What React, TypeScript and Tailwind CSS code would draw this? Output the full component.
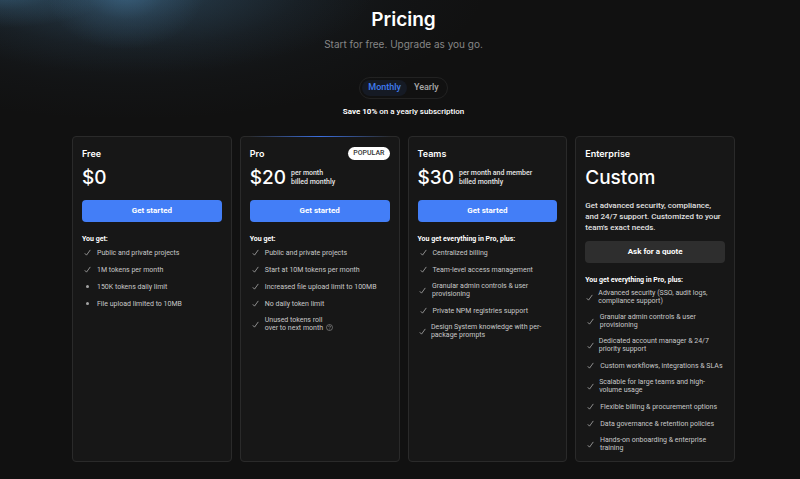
import React, { useState } from 'react';

type Billing = 'monthly' | 'yearly';

interface Feature {
  label: React.ReactNode;
  limited?: boolean;
}

interface Plan {
  name: string;
  price: string;
  terms?: string[];
  description?: string;
  popular?: boolean;
  cta: string;
  intro: string;
  features: Feature[];
}

const HelpIcon: React.FC = () => (
  <svg viewBox="0 0 14 14" className="inline-block w-[7px] h-[7px] ml-[3px] align-[-1px]" fill="none" stroke="#9a9a9a" strokeWidth="1.2" aria-hidden="true">
    <circle cx="7" cy="7" r="6" />
    <path d="M5.2 5.6a1.9 1.9 0 1 1 2.7 1.7c-.6.3-.9.6-.9 1.2" />
    <path d="M7 9.8v1" />
  </svg>
);

const plans: Plan[] = [
  {
    name: 'Free',
    price: '$0',
    cta: 'Get started',
    intro: 'You get:',
    features: [
      { label: 'Public and private projects' },
      { label: '1M tokens per month' },
      { label: '150K tokens daily limit', limited: true },
      { label: 'File upload limited to 10MB', limited: true },
    ],
  },
  {
    name: 'Pro',
    price: '$20',
    terms: ['per month', 'billed monthly'],
    popular: true,
    cta: 'Get started',
    intro: 'You get:',
    features: [
      { label: 'Public and private projects' },
      { label: 'Start at 10M tokens per month' },
      { label: 'Increased file upload limit to 100MB' },
      { label: 'No daily token limit' },
      { label: <>Unused tokens roll<br />over to next month<HelpIcon /></> },
    ],
  },
  {
    name: 'Teams',
    price: '$30',
    terms: ['per month and member', 'billed monthly'],
    cta: 'Get started',
    intro: 'You get everything in Pro, plus:',
    features: [
      { label: 'Centralized billing' },
      { label: 'Team-level access management' },
      { label: 'Granular admin controls & user provisioning' },
      { label: 'Private NPM registries support' },
      { label: 'Design System knowledge with per-package prompts' },
    ],
  },
  {
    name: 'Enterprise',
    price: 'Custom',
    description: "Get advanced security, compliance, and 24/7 support. Customized to your team's exact needs.",
    cta: 'Ask for a quote',
    intro: 'You get everything in Pro, plus:',
    features: [
      { label: 'Advanced security (SSO, audit logs, compliance support)' },
      { label: 'Granular admin controls & user provisioning' },
      { label: 'Dedicated account manager & 24/7 priority support' },
      { label: 'Custom workflows, integrations & SLAs' },
      { label: 'Scalable for large teams and high-volume usage' },
      { label: 'Flexible billing & procurement options' },
      { label: 'Data governance & retention policies' },
      { label: 'Hands-on onboarding & enterprise training' },
    ],
  },
];

const FeatureRow: React.FC<{ feature: Feature }> = ({ feature }) => (
  <li className="flex items-center min-h-[9px]">
    {/* The marker gives up some width when the label wraps */}
    <span className="flex justify-center w-[7px] min-w-0 ml-[2px] mr-[6px]">
      {feature.limited ? (
        <span className="w-[3px] h-[3px] rounded-full bg-[#a3a3a3] shrink-0" />
      ) : (
        <svg viewBox="0 0 14 14" className="w-[7px] h-[7px] shrink-0" fill="none" stroke="#b4b4b4" strokeWidth="1.5" aria-hidden="true">
          <path d="M1.5 8.5 5 12.3 12.6 1.8" />
        </svg>
      )}
    </span>
    <span>{feature.label}</span>
  </li>
);

const PlanCard: React.FC<{ plan: Plan }> = ({ plan }) => (
  <article className="relative min-w-0 flex flex-col rounded-[4px] border border-[#2a2a2a] bg-[#171717] px-[9px] pt-[10px] pb-[9px]">
    {plan.popular && (
      <div className="absolute -top-px left-2 right-2 h-px bg-gradient-to-r from-transparent via-[#3b6fe0] to-transparent" />
    )}
    <div className="flex items-center justify-between h-[13px]">
      <h2 className="text-[9px] leading-[13px] font-semibold text-white">{plan.name}</h2>
      {plan.popular && (
        <span className="rounded-full bg-white px-[5px] font-[Roboto,sans-serif] text-[7px] leading-[13px] font-medium text-[#333333]">POPULAR</span>
      )}
    </div>
    <div className="flex items-center gap-[5px] h-[26px] mt-[5px]">
      <span className="text-[19px] leading-[26px] font-medium text-white">{plan.price}</span>
      {plan.terms && (
        <span className="font-[Roboto,sans-serif] text-[7px] leading-[9px] font-medium text-[#e5e5e5]">
          {plan.terms.map((t) => (
            <span key={t} className="block whitespace-nowrap">{t}</span>
          ))}
        </span>
      )}
    </div>
    {plan.description ? (
      <>
        <p className="mt-[9px] font-[Roboto,sans-serif] text-[8px] leading-[11px] font-medium text-[#e0e0e0]">{plan.description}</p>
        <button className="mt-2 h-[22px] rounded-[4px] bg-[#2e2e2e] font-[Roboto,sans-serif] text-[8px] font-bold text-white">{plan.cta}</button>
      </>
    ) : (
      <button className="mt-[9px] h-[22px] rounded-[4px] bg-[#437ef7] font-[Roboto,sans-serif] text-[8px] font-bold text-white">{plan.cta}</button>
    )}
    <h3 className="mt-3 font-[Roboto,sans-serif] text-[7px] leading-[10px] font-bold text-white">{plan.intro}</h3>
    <ul className="mt-1 flex flex-col gap-2 font-[Roboto,sans-serif] text-[7px] leading-[8px] text-[#c8c8c8]">
      {plan.features.map((f, i) => (
        <FeatureRow key={i} feature={f} />
      ))}
    </ul>
  </article>
);

const App: React.FC = () => {
  const [billing, setBilling] = useState<Billing>('monthly');

  return (
    <div
      className="min-h-screen bg-[#111111] bg-no-repeat bg-[radial-gradient(80px_60px_at_125px_-10px,#4a7fa880,#4a7fa82a_50%,transparent),radial-gradient(240px_86px_at_135px_-12px,#42769a68,#42769a33_35%,#42769a10_70%,transparent),radial-gradient(110px_36px_at_0px_-8px,#42769a88,#42769a33_50%,transparent),radial-gradient(360px_140px_at_130px_-20px,#33506a50,#33506a28_45%,#33506a0c_75%,transparent)] pl-[72px] pr-[65px] pb-[17px] border-b border-[#170d10]"
      style={{ fontFamily: "Inter, 'Liberation Sans', sans-serif" }}
    >
      <header className="flex flex-col items-center pt-[7px]">
        <h1 className="text-[19px] leading-[26px] font-semibold text-white">Pricing</h1>
        <p className="mt-1 text-[10px] leading-[14px] text-[#868686]">Start for free. Upgrade as you go.</p>
        <div className="mt-[26px] flex gap-px rounded-full border border-[#222222] p-[2px]">
          {(['monthly', 'yearly'] as Billing[]).map((b) => (
            <button
              key={b}
              onClick={() => setBilling(b)}
              className={`h-4 rounded-full px-[6px] font-[Roboto,sans-serif] text-[9px] font-medium ${billing === b ? 'bg-[#151a24] text-[#3f7af0]' : 'text-[#a8a8a8]'}`}
            >
              {b === 'monthly' ? 'Monthly' : 'Yearly'}
            </button>
          ))}
        </div>
        <p className="mt-[7px] font-[Roboto,sans-serif] text-[8px] leading-[12px] font-medium text-white">
          <strong className="font-bold">Save 10%</strong> on a yearly subscription
        </p>
      </header>

      <main className="mt-[18px] grid grid-cols-4 gap-2">
        {plans.map((plan) => (
          <PlanCard key={plan.name} plan={plan} />
        ))}
      </main>
    </div>
  );
};

export default App;
